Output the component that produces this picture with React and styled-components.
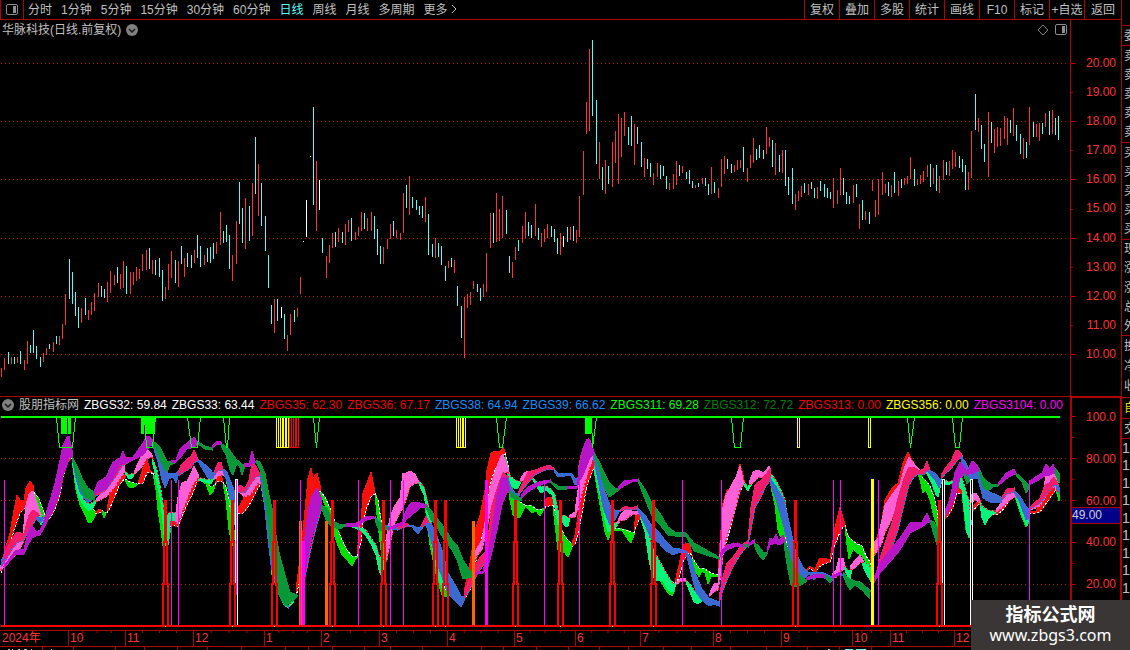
import React from "react";
import styled, { createGlobalStyle } from "styled-components";

const GlobalStyle = createGlobalStyle`
  * {
    box-sizing: border-box;
  }

  body {
    margin: 0;
    background: #000;
    color: #c0c0c0;
    font-family: "Liberation Sans", "Noto Sans CJK SC", sans-serif;
    font-size: 12px;
    line-height: 16px;
  }
`;

// ---------- Data ----------

const periods = ["分时", "1分钟", "5分钟", "15分钟", "30分钟", "60分钟", "日线", "周线", "月线", "多周期", "更多"];
const tools = ["复权", "叠加", "多股", "统计", "画线", "F10", "标记", "+自选", "返回"];

const prices = ["20.00", "19.00", "18.00", "17.00", "16.00", "15.00", "14.00", "13.00", "12.00", "11.00", "10.00"];
const priceTicks = [63, 92, 121, 150, 179, 209, 238, 267, 296, 325, 354];
const levels = ["100.0", "80.00", "60.00", "40.00", "20.00"];

const readings = [
  ["ZBGS32: 59.84", "#ffffff"],
  ["ZBGS33: 63.44", "#ffffff"],
  ["ZBGS35: 62.30", "#f00000"],
  ["ZBGS36: 67.17", "#f00000"],
  ["ZBGS38: 64.94", "#1090ff"],
  ["ZBGS39: 66.62", "#1090ff"],
  ["ZBGS311: 69.28", "#00ff00"],
  ["ZBGS312: 72.72", "#008000"],
  ["ZBGS313: 0.00", "#f00000"],
  ["ZBGS356: 0.00", "#ffff00"],
  ["ZBGS3104: 0.00", "#ff00ff"],
];

// label and share of the axis width
const months = [
  ["2024年", 68],
  ["10", 57],
  ["11", 68],
  ["12", 71],
  ["1", 57],
  ["2", 58],
  ["3", 68],
  ["4", 67],
  ["5", 61],
  ["6", 65],
  ["7", 73],
  ["8", 68],
  ["9", 71],
  ["10", 38],
  ["11", 64],
  ["12", 167],
];

const footTicks = [42, 73, 115, 144, 177, 207, 241, 285, 308, 332, 364, 390, 422, 481, 503, 536, 568, 599, 628, 663, 691, 730, 766, 807, 839, 871];

const quoteGroups = [
  { size: 25, rows: [] },
  { size: 20, rows: ["委"] },
  { size: 97, rows: ["卖", "卖", "卖", "卖", "卖"] },
  { size: 97, rows: ["买", "买", "买", "买", "买"] },
  { size: 97, rows: ["现", "涨", "涨", "总", "外"] },
  { size: 61, rows: ["换", "净", "收"] },
  { size: 21, rows: ["自"], color: "#e0e000" },
  { size: 19, rows: ["交"] },
  { size: 213, rows: ["1", "1", "1", "1", "1", "1", "1", "1", "1", "1", "1", "1"], large: true },
];

// x, high, low, kind (r = up, c = down, w = flat)
const candles = `
1,368,377,r 4,358,370,r 8,352,364,c 11,357,364,r 14,357,364,c 17,357,363,r 20,351,364,c 24,360,370,r 27,341,364,r
30,345,353,c 33,330,353,c 36,346,359,c 40,357,367,c 43,353,362,r 46,348,355,r 49,344,349,c 53,342,352,r 56,336,344,c
59,336,345,r 62,324,339,r 65,294,325,r 69,259,299,c 72,272,304,c 75,292,316,c 78,307,328,c 81,308,323,r 85,298,315,c
88,310,320,r 91,302,315,r 94,293,311,r 98,283,297,r 101,286,297,c 104,289,298,c 107,282,302,r 110,271,293,r
114,275,285,r 117,267,283,c 120,274,289,r 123,261,288,r 126,266,294,c 130,272,294,r 133,272,285,r 136,267,281,r
139,269,279,r 142,254,271,r 146,250,270,r 149,248,269,c 152,260,274,r 155,260,275,c 159,258,277,c 162,270,301,c
165,287,299,r 168,264,290,r 171,251,278,r 175,260,283,c 178,261,287,r 181,246,264,c 184,258,277,r 187,253,267,c
191,255,268,c 194,250,263,r 197,235,258,c 200,246,267,c 204,255,265,r 207,248,262,c 210,247,263,c 213,243,259,c
216,242,254,r 220,212,245,r 223,231,243,c 226,225,242,c 229,235,269,c 232,255,281,r 236,221,264,r 239,182,224,c
242,208,243,c 245,198,249,r 249,206,241,c 252,183,236,r 255,137,194,c 258,164,216,r 261,183,226,c 265,216,251,c
268,255,288,c 271,305,324,c 274,299,333,r 277,299,321,c 281,307,318,w 284,314,339,c 287,335,351,r 290,314,335,r
294,310,322,c 297,308,317,r 300,277,294,r 303,241,242,w 306,200,237,w 310,156,157,w 313,107,205,c 316,161,231,r
319,180,210,w 322,238,253,c 326,256,278,r 329,245,263,r 332,233,248,r 335,232,247,c 338,228,242,r 342,232,243,c
345,224,245,r 348,220,232,r 351,218,241,c 355,232,240,r 358,227,236,r 361,212,231,r 364,213,229,c 367,218,231,r
371,212,231,r 374,216,239,c 377,229,255,c 380,246,264,c 383,247,264,r 387,239,249,r 390,224,239,r 393,221,236,c
396,230,238,r 400,233,240,r 403,193,233,r 406,185,208,c 409,176,215,r 412,197,208,c 416,200,210,c 419,206,215,c
422,206,218,c 425,197,222,r 428,214,255,c 432,244,257,c 435,238,258,r 438,243,257,c 441,246,265,c 445,266,281,c
448,261,268,r 451,258,267,c 454,260,273,r 457,286,306,c 461,306,338,c 464,297,358,r 467,294,308,r 470,292,305,r
473,281,289,r 477,284,292,c 480,288,301,c 483,284,297,r 486,253,292,r 490,213,248,r 493,213,243,c 496,193,242,r
499,209,241,r 502,196,238,r 506,210,234,c 509,256,273,c 512,262,278,r 515,247,260,r 518,240,251,c 522,226,243,r
525,212,238,r 528,222,236,c 531,225,238,c 535,204,236,r 538,228,240,c 541,233,247,r 544,229,242,r 547,224,238,r
551,226,237,c 554,229,242,c 557,238,254,c 560,233,255,r 563,236,247,w 567,227,242,c 570,227,240,r 573,226,241,c
576,230,243,r 579,196,237,r 583,151,195,r 586,102,134,r 589,49,131,r 592,40,116,c 596,100,164,c 599,142,179,r
602,167,190,c 605,160,194,r 608,166,184,c 612,142,187,r 615,131,163,r 618,114,184,r 621,118,157,r 624,112,136,r
628,127,145,c 631,116,146,c 634,124,165,r 637,127,144,c 641,142,167,c 644,158,177,r 647,159,169,c 650,163,177,c
653,173,185,r 657,163,177,r 660,165,179,c 663,166,176,c 666,176,189,c 669,183,190,r 673,174,189,r 676,161,185,r
679,165,176,c 682,166,173,r 686,172,179,c 689,170,184,c 692,181,188,c 695,185,188,r 698,183,187,c 702,178,184,r
705,178,186,c 708,184,195,c 711,167,194,r 714,182,193,c 718,188,198,r 721,159,187,r 724,156,174,r 727,159,169,c
731,164,173,c 734,165,172,r 737,160,170,r 740,160,168,r 743,147,172,c 747,168,182,r 750,155,168,r 753,138,163,r
756,149,160,c 759,145,158,c 763,150,159,c 766,127,154,r 769,137,147,r 772,140,167,c 775,143,175,r 779,155,172,c
782,150,173,r 785,150,186,c 788,177,195,c 792,168,204,c 795,194,210,r 798,191,201,r 801,186,197,r 804,183,193,c
808,184,195,r 811,182,189,c 814,188,198,c 817,187,199,r 820,181,191,c 824,184,197,c 827,188,198,c 830,192,199,c
833,178,208,r 837,190,204,r 840,168,195,r 843,178,195,c 846,192,204,c 849,196,204,c 853,185,203,r 856,184,197,c
859,204,229,r 862,200,220,c 865,211,220,r 869,212,224,c 872,180,191,r 875,200,217,r 878,179,215,r 882,172,195,r
885,184,193,r 888,182,196,c 891,185,197,r 894,172,193,c 898,181,196,r 901,179,188,c 904,178,185,r 907,176,184,r
910,157,179,r 914,169,186,c 917,179,185,r 920,175,184,r 923,171,182,r 927,165,177,r 930,164,187,c 933,168,184,r
936,165,191,c 939,176,193,r 943,160,180,r 946,162,175,c 949,161,176,r 952,150,169,r 955,152,167,r 959,156,168,c
962,159,172,c 965,165,190,c 968,172,190,r 971,131,178,r 975,94,130,c 978,118,132,r 981,125,149,c 984,144,162,c
988,112,177,r 991,122,143,c 994,129,153,r 997,127,147,r 1000,128,146,r 1004,116,139,r 1007,118,145,r 1010,120,133,c
1013,108,136,r 1016,125,141,c 1020,134,154,c 1023,138,159,r 1026,142,158,c 1029,107,145,r 1033,122,137,c
1036,124,137,r 1039,123,141,r 1042,123,134,c 1045,113,127,r 1049,111,135,c 1052,110,134,r 1055,118,135,c
1058,116,140,c`;

// Ribbons: every run is "u" (rising) or "d" (falling) followed by x,top,bottom points
const ribbons = [
  {
    up: "#f8100c",
    down: "#00e000",
    line: "#ffffff",
    runs: `
u 1,567,573 5,550,560 10,533,545 14,510,530 17,495,522 20,500,513 24,501,509 26,488,505 30,481,500 33,485,494 34,492,493
d 34,492,493 36,495,506 39,499,513 42,507,520 45,515,518
u 45,516,519 50,514,518 55,502,509 60,485,495 63,468,477 68,456,462 72,456,458
d 72,457,460 76,475,490 80,500,505 85,504,515 88,507,522 91,508,523 95,511,516
u 95,513,514 99,509,513 102,511,512
d 102,510,512 104,512,518 106,512,513
u 107,510,513 110,493,508 115,483,496 120,477,484 125,474,478
d 125,479,480 128,481,486 131,482,488 134,483,487 137,484,485
u 138,483,484 143,468,483 147,459,473 150,470,472 153,473,474
d 153,473,474 156,478,490 158,482,510 161,497,530 163,510,546 165,520,546 168,520,545 170,528,533
u 170,518,527 174,514,525 177,519,527 178,520,526 182,510,517 187,498,505 192,489,495 197,479,482 200,478,480
d 200,479,480 206,480,484 210,486,495 213,486,492 215,484,486
u 215,484,485 218,475,481 221,474,481 223,482,483
d 223,482,483 226,487,500 229,500,530 232,520,546 234,530,540
u 238,508,514 243,500,513 248,488,507 252,482,500 258,478,488 261,482,484
d 261,484,486 266,500,512 270,535,550 274,565,575
u 296,590,597 301,550,575 305,510,560 308,478,530 311,468,510 313,478,500 317,473,490 320,485,492
d 320,491,493 325,497,505 330,508,522 337,527,543 342,540,555 347,550,560 352,556,566 355,557,560 358,556,557
u 357,553,556 361,523,543 363,493,523 367,483,507 371,472,497 374,487,494 375,493,494
d 375,493,495 378,500,525 381,520,550 385,540,563 387,555,560
d 425,500,505 430,525,545 434,545,565 438,565,583 442,583,595 446,590,597 450,592,595
u 464,592,600 470,563,590 475,530,565 480,515,545 485,490,525 487,470,505 491,453,480 495,451,470 500,452,462 503,447,455 505,452,454
d 505,453,455 508,465,480 510,478,500 513,490,515 516,494,518 520,502,517 525,505,507
d 525,505,506 532,506,513 536,509,511 540,510,516 544,508,509
u 544,508,512 546,499,506 549,497,506 552,498,505 554,505,506
d 553,505,506 555,512,525 558,520,550 561,527,552 564,535,552 568,540,557 572,544,547
u 572,543,547 575,535,544 578,515,535 583,485,508 587,465,485 592,460,473 595,462,465
d 594,465,470 600,495,505 605,520,532 608,530,540 611,528,533 614,527,530
d 614,528,530 622,529,530 626,530,537 631,532,543 634,532,535
u 634,530,533 636,513,527 639,513,520 641,517,518
d 641,515,518 648,530,540 654,553,565 660,563,580 667,575,592 672,582,596 674,583,592
u 675,582,584 679,565,578 683,545,562 687,543,555 690,545,553 692,555,556
d 692,557,558 695,562,570 699,568,577 702,568,571 705,569,573 708,571,584 711,573,577 714,574,576 718,575,577
u 718,570,575 721,530,560 723,503,553 727,490,540 732,487,522 736,478,505 740,464,492 743,475,485 745,485,487
d 744,482,484 748,487,490 752,480,484
d 770,475,480 772,480,492 775,488,505 778,498,530 780,510,536 783,520,536 786,540,550 790,560,575 794,575,580
u 803,573,575 810,566,568 815,570,573 819,559,567 824,558,564 830,560,562 835,527,545 840,507,532 843,518,527 845,525,526
d 845,525,526 847,533,545 849,537,559 853,541,549 857,544,553 862,546,556 866,556,562 870,562,571
u 870,550,565 876,540,550 881,525,540 885,500,525 892,488,510 898,483,500 903,463,480 908,452,465 911,458,462 918,470,472
d 918,470,473 920,472,480 923,478,493 926,481,490 930,486,500 934,497,517 937,510,525 939,525,542
u 944,512,520 948,505,516 953,485,507 957,476,493 962,488,494
d 962,490,494 966,515,530 969,525,538
u 972,508,512 979,500,504 986,511,513 996,510,515 1002,507,511 1010,495,500 1015,494,497
d 1015,494,497 1021,507,515 1026,518,527 1029,518,522
u 1029,511,513 1036,511,513 1040,505,512 1045,495,505 1050,485,498 1056,480,490
d 1056,485,490 1059,490,501`,
  },
  {
    up: "#ff60d8",
    down: "#00f57a",
    line: "#f02020",
    runs: `
u 1,565,570 10,553,560 18,543,553 23,533,543 26,505,535 29,494,523 33,491,515 36,500,513 40,512,516 43,517,518
d 38,515,518 41,515,525 44,518,519
u 45,517,519 58,480,495 66,455,462 72,452,456
d 72,456,459 75,465,480 79,488,497 84,500,506 89,504,511 93,502,508 96,500,502
u 96,499,502 106,490,497 115,477,487 124,465,473
d 125,471,473 128,474,478 131,474,479 135,473,474
u 134,473,475 138,463,471 142,455,467 146,449,460 149,451,458 152,455,457
d 152,457,460 157,470,483 161,490,503 164,510,535 166,515,545 168,514,545 170,512,520 175,513,520 177,517,524
u 175,520,522 178,497,524 182,483,513 187,481,500 191,473,490 194,466,483 198,474,478
d 198,478,480 205,479,482 211,479,484 214,476,478
u 214,476,480 219,470,476 225,473,475
d 226,475,478 229,485,495 232,500,520 234,500,525
u 238,488,491 244,490,497 250,484,495 254,474,490 258,471,483 261,482,484
d 262,480,486 266,500,512 269,525,545 272,560,575 275,575,582 279,588,592 284,600,605 288,606,608 293,600,603
d 352,526,527 360,527,530 366,530,536 371,538,544 376,545,555 379,555,570 381,558,575 385,560,564
u 386,540,562 390,518,545 394,507,525 400,498,513 403,473,508 406,473,500 410,471,487 415,474,483 419,482,483
d 419,481,484 424,487,495 428,503,520 431,520,540 435,545,563 439,565,580 443,580,590
u 474,553,560 482,540,550 487,510,530 490,488,513 495,472,495 500,458,480 503,454,473 507,465,472 509,472,473
d 508,472,475 511,477,485 515,480,489 518,481,488 521,481,482
u 520,480,482 524,473,480 528,471,475 531,475,476
d 532,477,478 537,482,487 541,486,493 546,486,490 552,490,495 555,495,508 558,510,525 561,515,520 565,515,526 568,518,526 570,517,518
u 569,516,518 575,512,517 578,490,510 581,470,498 586,458,480 590,451,467 593,450,460 595,460,462
d 594,455,470 600,480,495 605,505,520 608,515,532 612,522,530 616,522,527 618,523,524
u 617,523,525 621,514,520 625,510,520 632,511,515 638,511,514 641,514,515
d 640,514,517 645,525,532 649,535,560 652,545,575 655,553,580 663,567,581 668,576,590 673,583,592 676,583,585
u 676,583,585 681,578,581 685,578,581
d 686,580,582 690,584,592 694,590,602 698,595,604 703,597,600
u 709,595,597 714,584,592 718,583,590 721,540,575 723,507,555 726,495,540 730,488,527 736,477,507 740,466,490 743,480,485 745,485,487
d 744,483,485 748,487,491 751,483,485
u 749,483,485 753,472,483 758,470,478 764,473,477 769,466,480 771,475,480
d 771,474,480 776,480,490 781,490,500 785,500,530 789,530,550
u 832,574,576 836,570,578 839,558,573 843,558,570 845,566,569
d 844,566,568 848,570,577 850,570,579 852,568,570
u 850,567,570 855,560,568 860,555,563 863,560,562
d 862,562,564 866,563,573 870,567,580
u 871,552,562 874,542,556 878,538,550 882,520,543 885,505,533 893,493,517 900,484,500 905,466,485 909,457,472 915,465,470 920,470,471
d 920,470,472 927,471,474 932,476,484 936,482,495 938,484,497 941,480,484
d 944,480,484 950,482,484 956,478,482 962,478,490 965,487,515 967,495,533 969,500,537 971,520,525
u 971,495,503 976,493,500 980,500,503
d 980,500,504 982,506,518 985,508,525 988,510,519 993,511,514 996,512,513
u 996,510,513 1003,500,507 1010,492,500 1015,493,497
d 1016,495,498 1022,505,515 1027,518,526 1029,515,518
u 1029,509,511 1040,498,506 1044,490,500 1046,473,495 1049,478,492 1054,470,487 1058,485,492`,
  },
  {
    up: "#f01c6c",
    down: "#3c68d0",
    line: "#1e80f0",
    runs: `
u 1,562,567 7,548,558 13,537,548 17,532,543 24,534,540 29,515,530 33,510,524 38,513,517
d 1,560,566 3,558,560
d 36,517,519 40,517,523 44,517,518
d 72,455,458 76,472,478 80,485,492 88,497,503 93,495,499
u 93,496,498 106,484,490 115,468,478 122,458,466 133,457,460 142,449,455 150,440,446 154,442,444
d 153,443,446 158,453,462 162,462,480 165,470,488 169,474,479 173,473,477 176,473,483 179,470,473
u 178,474,476 181,465,474 186,460,471 191,456,468 194,450,463 198,459,461
d 198,459,461 203,463,470 208,467,478 213,473,478 216,472,473
u 214,472,474 218,463,471 221,462,470 223,470,471
d 223,469,471 227,472,482 230,480,499 234,490,502
u 235,490,495 240,485,492 245,488,493 249,480,487 252,463,482 256,466,477 260,474,476
d 260,474,476 264,490,500 267,510,530 271,555,565 275,580,583 279,590,594 288,605,607
u 300,588,590 305,576,577 312,543,544 317,523,524 322,507,508
d 322,507,508 332,520,521 340,525,526 352,525,526
u 352,525,526 363,520,521 375,517,518
d 375,517,519 383,525,527 397,528,530
u 397,527,530 402,522,528 408,524,526
d 408,525,526 412,525,527 418,528,534 423,526,527
u 421,526,528 426,516,525 429,522,524
d 426,523,525 431,523,540 436,533,560 443,553,580 448,573,593 456,586,602 461,596,607 464,597,601
u 464,592,600 471,575,587 478,560,573 485,552,563 489,530,550 492,505,530 498,486,500 503,473,485 508,476,478
d 508,478,485 511,487,497 515,493,499 519,494,496
u 518,493,496 523,482,489 528,472,483 535,470,475 543,467,471 549,465,469 554,468,470
d 554,470,471 558,473,477 565,473,476 571,473,475 575,478,485 578,480,483
u 578,470,480 581,455,470 585,445,455 588,440,445
d 593,452,456 598,468,480 603,487,507 607,497,518 610,505,525 615,510,520 619,511,512
u 619,511,512 625,506,509 631,508,509 637,506,509
d 637,507,509 645,515,525 652,526,540 659,532,543 665,540,550 673,548,555 680,549,552 686,551,553
d 686,551,553 691,558,573 696,575,592 702,589,600 709,598,606 714,600,604 719,602,606
u 719,597,603 723,577,590 727,563,580 733,557,567 740,547,555 748,540,545 751,507,530 755,485,508 761,480,497 766,474,486 770,469,481
d 770,478,482 777,488,503 784,500,527 790,527,555 796,553,574 803,567,579 808,572,575
d 808,572,574 810,572,575 814,572,580 818,572,574 824,573,578 832,577,580
u 832,577,579 840,573,574
d 840,573,574 850,580,581 860,582,584 870,590,591
u 877,570,572 881,555,565 887,537,555 893,520,545 898,498,530 904,478,505 909,467,485 914,467,477 919,471,474
u 919,472,474 924,468,475 927,461,471 930,470,471
d 928,470,472 935,473,480 939,478,488 941,480,482
u 941,475,479 946,467,473 951,461,469 956,450,462 959,451,459 962,455,458
d 961,456,460 966,463,475 969,470,481 973,468,478 978,471,479 983,487,498 990,492,502 1001,497,502
u 1002,497,500 1007,489,494 1014,488,492
d 1014,490,492 1020,496,503 1026,506,520 1029,510,518
u 1029,508,510 1040,498,503 1045,485,497 1049,483,492 1054,477,485 1058,484,486
d 1056,485,488 1059,487,493`,
  },
  {
    up: "#b814c8",
    down: "#089838",
    runs: `
u 5,565,567 15,551,555 24,549,554 28,533,545 32,525,538 36,532,536 40,530,535 43,524,530 48,507,520 55,483,507 60,460,492 63,445,475 67,437,465 69,436,458 72,450,457
d 72,456,458 78,468,480 83,480,495 88,488,499 94,492,500
u 94,492,495 98,482,492 106,477,489 113,462,478 120,458,465 123,451,463 126,459,463 133,457,460 143,443,455 147,436,450 150,437,446 153,440,442
d 153,441,443 160,447,460 165,457,470 167,461,472 170,461,465 175,461,463
u 171,460,462 176,460,462 180,449,458 187,443,449 194,437,447 198,443,445
d 198,442,444 205,446,449 212,448,450
u 212,446,449 217,441,444 221,442,445
d 221,443,446 226,447,455 230,450,470 233,455,475 237,460,463 240,462,468 242,464,475 245,464,466
u 244,463,466 249,464,467 252,451,464 255,461,463
d 256,460,462 260,462,470 265,473,495 268,490,525 272,508,560 276,535,580 279,552,595 285,575,606 290,592,603 297,595,597
u 299,580,590 304,545,578 308,510,557 312,496,537 317,488,522 321,497,507
d 321,505,507 327,508,522 333,521,527 340,525,529 346,524,525
u 346,524,526 358,523,526 365,517,521 372,516,518 375,518,519
d 375,518,520 379,522,531 385,525,529 388,528,530
u 388,528,530 402,522,525 407,508,519 412,502,515 420,503,508 427,505,507
d 426,505,507 431,510,520 436,517,525 444,527,540 452,540,550 457,545,560 463,560,579 472,573,577
u 472,573,575 483,571,573 488,553,567 492,530,552 497,495,530 502,477,505 507,478,492 510,490,493
d 509,490,493 515,495,500 521,498,500
u 521,495,499 528,487,492 536,483,487 543,481,484 550,480,482
d 550,481,482 558,486,490 567,487,489
u 567,487,489 577,486,488 579,468,482 583,448,475 587,439,465 590,440,458 594,452,454
d 594,453,455 599,461,468 604,472,487 609,482,497 615,488,493 619,488,490
u 618,487,490 624,481,486 632,480,482 638,479,481
d 638,479,481 646,491,502 653,505,518 660,513,525 668,527,535 675,532,536 686,533,536 694,543,551 703,548,554 719,557,559
u 720,553,557 727,545,550 736,543,546 744,545,547
d 744,544,546 748,545,547
u 748,544,546 754,540,543
d 754,543,545 758,545,554 763,552,560 767,552,554
u 767,550,553 770,538,545 773,540,544 776,534,543 779,541,545 783,535,543 785,540,542
d 784,540,545 788,550,570 791,560,585 796,570,587 801,576,585 806,580,582
u 806,578,580 813,575,578 824,574,577 828,578,580
d 825,575,577 830,578,583 832,578,580
u 832,576,579 840,572,574
d 843,572,575 847,577,585 850,579,590 855,581,585 862,583,590 869,590,598
u 873,580,584 880,563,573 890,550,562 900,538,550 910,523,533 922,522,527 927,513,523 930,520,522
d 930,520,521 934,522,535 937,527,545
u 944,512,518 950,500,508 955,472,497 960,462,478 965,468,475
d 964,473,476 967,476,484 969,478,482
u 966,473,476 970,465,473 972,461,474 975,463,472 979,468,471
d 979,468,473 983,477,487 988,482,491 993,485,487 998,484,486
u 998,484,486 1006,473,479 1014,469,474 1016,473,475
d 1016,473,476 1022,478,482 1026,482,493 1029,485,489
u 1029,482,485 1037,476,481 1042,473,478 1046,464,475 1050,469,475 1053,464,473 1055,470,473
d 1055,468,473 1059,473,483`,
  },
];

// x, top, width, colour; all of them stand on the base line
const signalBars = [
  [299, 521, 3, "#ff6600"],
  [325, 521, 3, "#ff6600"],
  [472, 521, 3, "#ff6600"],
  [302, 541, 3, "#ff00ff"],
  [485, 480, 3, "#ff00ff"],
  [871, 479, 3, "#ffff00"],
  ...[4, 171, 178, 300, 358, 390, 403, 544, 579, 682, 721, 833, 840, 878, 1029].map((x) => [x, 480, 1, "#ff00ff"]),
];
const spikes = [165, 232, 274, 332, 383, 435, 445, 515, 560, 612, 653, 795, 939];
const whiteBoxes = [235, 942, 970];

const funnels = [
  "56,417 59,447 72,447 75,417",
  "144,417 146,447 152,447 155,417",
  "187,417 191,447 197,447 200,417",
  "223,417 226,447 227,447 229,417",
  "313,417 316,447 319,417",
  "496,417 499,447 502,447 506,417",
  "591,417 592,447 596,417",
  "731,417 734,447 740,447 743,417",
  "907,417 910,447 914,417",
  "952,417 955,447 959,447 962,417",
];
const greenBlocks = [
  [61, 6],
  [68, 3],
  [141, 3],
  [145, 10],
  [585, 6],
];
const combs = [
  { color: "#ffff00", xs: [276, 278, 280, 282, 283, 285, 286, 288] },
  { color: "#ff0000", xs: [289, 291, 293, 295, 296, 298] },
  { color: "#ffff00", xs: [456, 458, 460, 462, 463, 465] },
  { color: "#ffff00", xs: [797, 799] },
  { color: "#ffff00", xs: [868, 870] },
];

const candleColors = { r: "#ff3232", c: "#54fcfc", w: "#ffffff" };

// ---------- Styles ----------

const Screen = styled.div`
  position: relative;
  display: grid;
  grid-template-columns: minmax(0, 1fr) 9px;
  height: 100vh;
  min-height: 400px;
  overflow: hidden;
`;

const Terminal = styled.main`
  display: flex;
  flex-direction: column;
  min-width: 0;
  min-height: 0;
`;

const Toolbar = styled.header`
  display: flex;
  flex: none;
  height: 20px;
  border-bottom: 1px solid #b00000;
`;

const IconButton = styled.button`
  display: flex;
  align-items: center;
  justify-content: center;
  padding: 0;
  border: none;
  background: none;
  cursor: pointer;
`;

const LayoutButton = styled(IconButton)`
  width: 24px;
  border-left: 1px solid #b00000;
  border-right: 1px solid #b00000;
`;

const PeriodNav = styled.nav`
  display: flex;
  align-items: center;
  flex: 1;
  gap: 9px;
  padding-left: 4px;
`;

const TextButton = styled.button`
  padding: 0;
  border: none;
  background: none;
  color: ${({ $active }) => ($active ? "#54fcfc" : "#c0c0c0")};
  font: inherit;
  white-space: nowrap;
  cursor: pointer;
`;

const ToolNav = styled.nav`
  display: flex;
`;

const ToolButton = styled(TextButton)`
  width: 35px;
  border-left: 1px solid #b00000;

  &:last-child {
    width: 37px;
  }
`;

const Panel = styled.section`
  display: grid;
  grid-template-columns: minmax(0, 1fr) 51px;
  flex: ${({ $grow }) => $grow} 1 0;
  min-height: 0;
`;

const PanelBody = styled.div`
  display: flex;
  flex-direction: column;
  min-width: 0;
  min-height: 0;
`;

const IndicatorBody = styled(PanelBody)`
  border-top: 1px solid #b00000;
`;

const TitleRow = styled.div`
  display: flex;
  align-items: center;
  flex: none;
  gap: 5px;
  height: 19px;
  padding: 0 3px 0 2px;
`;

const Title = styled.h1`
  margin: 0;
  font: inherit;
  white-space: nowrap;
`;

const RowTools = styled.div`
  display: flex;
  gap: 6px;
  margin-left: auto;
`;

const ReadingRow = styled(TitleRow)`
  height: 16px;
  padding-right: 0;
  overflow: hidden;
`;

const Reading = styled.span`
  color: ${({ $color }) => $color};
  white-space: nowrap;
`;

const Plot = styled.svg`
  display: block;
  flex: 1;
  width: 100%;
  min-height: 0;
`;

const Axis = styled.div`
  position: relative;
  display: flex;
  min-height: 0;
  border-left: 1px solid #b00000;
`;

const IndicatorAxis = styled(Axis)`
  border: 2px solid #b00000;
  border-right-width: 1px;
  border-bottom: none;
`;

const Ticks = styled.svg`
  display: block;
  width: 6px;
  height: 100%;
`;

const Scale = styled.ol`
  display: flex;
  flex: 1;
  flex-direction: column;
  justify-content: space-between;
  margin: 0;
  padding: ${({ $indicator }) => ($indicator ? "13px 4px 40px 0" : "37px 5px 36px 0")};
  list-style: none;
  color: #ff3232;
  line-height: 12px;
  text-align: right;
`;

const CursorValue = styled.output`
  position: absolute;
  top: 109px;
  left: 0;
  right: 0;
  height: 17px;
  border-top: 1px solid #b00000;
  border-bottom: 1px solid #b00000;
  background: #000088;
  color: #d0d0d0;
  line-height: 15px;
`;

const Timeline = styled.div`
  display: grid;
  grid-template-columns: ${months.map(([, share]) => `minmax(0, ${share}fr)`).join(" ")};
  flex: none;
  height: 17px;
  border-top: 1px solid #b00000;
  border-bottom: 1px solid #b00000;
`;

// the gradient gives the week marks along the upper edge
const Month = styled.span`
  padding-left: 1px;
  border-left: 1px solid #b00000;
  background: linear-gradient(90deg, #b00000 1px, transparent 1px) 0 0 / 25% 2px repeat-x border-box;
  color: #ff3232;
  line-height: 15px;
  white-space: nowrap;

  &:first-child {
    border-left-color: transparent;
    background: none;
  }
`;

const Foot = styled.svg`
  display: block;
  flex: none;
  width: 100%;
  height: 3px;
`;

const QuoteStrip = styled.aside`
  display: flex;
  flex-direction: column;
  min-height: 0;
  overflow: hidden;
  border-left: 1px solid #b00000;
`;

const QuoteGroup = styled.div`
  display: flex;
  flex: ${({ $size }) => $size} 1 0;
  flex-direction: column;
  min-height: 0;
  padding-left: ${({ $large }) => ($large ? 0 : 2)}px;
  border-bottom: 1px solid #b00000;
  color: ${({ $color }) => $color || "#c0c0c0"};
  font-size: ${({ $large }) => ($large ? 14 : 12)}px;
`;

const QuoteCell = styled.span`
  display: flex;
  align-items: center;
  flex: 1 1 0;
  min-height: 0;
  white-space: nowrap;
`;

const Badge = styled.div`
  position: absolute;
  right: 0;
  bottom: 0;
  display: flex;
  flex-direction: column;
  align-items: center;
  width: 159px;
  height: 50px;
  padding-top: 5px;
  background: #3a3636;
  color: #fff;
`;

const BadgeName = styled.strong`
  font-size: 18px;
  line-height: 20px;
`;

const BadgeLink = styled.a`
  color: inherit;
  font-family: "Noto Sans", sans-serif;
  font-size: 16px;
  line-height: 21px;
  text-decoration: none;
`;

// ---------- Icons ----------

const LayoutIcon = () => (
  <svg width="12" height="11" viewBox="0 0 12 11">
    <rect x="0.5" y="0.5" width="11" height="10" rx="1.5" fill="none" stroke="#8c8c8c" />
    <rect x="7" y="2" width="3" height="7" fill="#909090" />
  </svg>
);

const DiamondIcon = () => (
  <svg width="12" height="12" viewBox="0 0 12 12">
    <path d="M6 1 11 6 6 11 1 6Z" fill="none" stroke="#808080" />
  </svg>
);

const ChevronBadge = () => (
  <svg width="12" height="12" viewBox="0 0 12 12">
    <circle cx="6" cy="6" r="6" fill="#808080" />
    <path d="M3 5 6 8 9 5" fill="none" stroke="#181818" strokeWidth="1.5" />
  </svg>
);

const MoreIcon = () => (
  <svg width="6" height="10" viewBox="0 0 6 10">
    <path d="M1 1 5 5 1 9" fill="none" stroke="#c0c0c0" />
  </svg>
);

// ---------- Charts ----------

const GridLines = ({ ys }) =>
  ys.map((y) => <path key={y} d={`M1 ${y + 0.5}H1068`} stroke="#b01010" strokeDasharray="1 3" />);

const PriceChart = () => (
  <Plot viewBox="0 39 1070 357" preserveAspectRatio="none" shapeRendering="crispEdges" role="img" aria-label="日线">
    <GridLines ys={priceTicks.filter((_, i) => i % 2 === 0)} />
    {candles
      .trim()
      .split(/\s+/)
      .map((item) => {
        const [x, high, low, kind] = item.split(",");
        return <rect key={x} x={x} y={high} width="1" height={low - high} fill={candleColors[kind]} />;
      })}
  </Plot>
);

const Ribbon = ({ up, down, line, runs }) =>
  runs
    .trim()
    .split("\n")
    .map((run) => {
      const [kind, ...rest] = run.split(" ");
      const pts = rest.map((p) => p.split(",").map(Number));
      const top = pts.map(([x, a]) => `${x},${a}`);
      const bottom = pts.map(([x, , b]) => `${x},${b}`);
      const color = kind === "u" ? up : down;
      return (
        <g key={run}>
          <polygon points={[...top, ...[...bottom].reverse()].join(" ")} fill={color} stroke={color} />
          {line && (
            <polyline
              points={(kind === "u" ? bottom : top).join(" ")}
              fill="none"
              stroke={line}
              strokeDasharray="2 2"
            />
          )}
        </g>
      );
    });

const IndicatorChart = () => (
  <Plot viewBox="0 413 1070 217" preserveAspectRatio="none" shapeRendering="crispEdges" role="img" aria-label="股朋指标网">
    <GridLines ys={[458, 500, 542, 584]} />
    {ribbons.map((ribbon) => (
      <Ribbon key={ribbon.up} {...ribbon} />
    ))}

    {/* signals on the base line */}
    {signalBars.map(([x, top, width, color]) => (
      <rect key={`${x}-${top}`} x={x} y={top} width={width} height={625 - top} fill={color} />
    ))}
    {whiteBoxes.map((x) => (
      <path key={x} d={`M${x + 0.5} 625V479.5H${x + 2.5}V625`} fill="none" stroke="#fff" />
    ))}
    <rect x="236" y="480" width="1" height="115" fill="#ff00ff" />
    <rect x="1" y="625" width="1058" height="2" fill="#ff0000" />
    {spikes.map((x) => (
      <g key={x}>
        <path
          d={`M${x - 2} 626V584H${x - 1}V542H${x}V501H${x + 1}V542H${x + 2}V584H${x + 3}V626`}
          fill="none"
          stroke="#ff0000"
          strokeWidth="2"
        />
        <rect x={x} y="626" width="1" height="1" fill="#ffff00" />
      </g>
    ))}

    {/* signals hanging from the top line */}
    <rect x="1" y="416" width="1059" height="2" fill="#00ff00" />
    {funnels.map((points) => (
      <polyline key={points} points={points} transform="translate(0.5 0.5)" fill="none" stroke="#00ff00" />
    ))}
    {greenBlocks.map(([x, width]) => (
      <rect key={x} x={x} y="417" width={width} height="17" fill="#00ff00" />
    ))}
    {combs.map(({ color, xs }) => (
      <g key={xs[0]} fill={color}>
        {xs.map((x) => (
          <rect key={x} x={x} y="418" width="1" height="30" />
        ))}
        <rect x={xs[0]} y="447" width={xs[xs.length - 1] - xs[0] + 1} height="1" />
      </g>
    ))}
  </Plot>
);

const App = () => {
  return (
    <>
      <GlobalStyle />
      <Screen>
        <Terminal>
          <Toolbar>
            <LayoutButton aria-label="布局">
              <LayoutIcon />
            </LayoutButton>
            <PeriodNav>
              {periods.map((name) => (
                <TextButton key={name} $active={name === "日线"}>
                  {name}
                  {name === "更多" && (
                    <>
                      {" "}
                      <MoreIcon />
                    </>
                  )}
                </TextButton>
              ))}
            </PeriodNav>
            <ToolNav>
              {tools.map((name) => (
                <ToolButton key={name}>{name}</ToolButton>
              ))}
            </ToolNav>
          </Toolbar>

          {/* Price panel */}
          <Panel $grow={376}>
            <PanelBody>
              <TitleRow>
                <Title>华脉科技(日线.前复权)</Title>
                <IconButton aria-label="展开">
                  <ChevronBadge />
                </IconButton>
                <RowTools>
                  <IconButton aria-label="标记">
                    <DiamondIcon />
                  </IconButton>
                  <IconButton aria-label="侧栏">
                    <LayoutIcon />
                  </IconButton>
                </RowTools>
              </TitleRow>
              <PriceChart />
            </PanelBody>
            <Axis>
              <Ticks viewBox="0 20 6 376" preserveAspectRatio="none" shapeRendering="crispEdges">
                {priceTicks.map((y, i) => (
                  <rect key={y} x="0" y={y} width={i % 2 ? 2 : 5} height="1" fill="#b00000" />
                ))}
              </Ticks>
              <Scale>
                {prices.map((price) => (
                  <li key={price}>{price}</li>
                ))}
              </Scale>
            </Axis>
          </Panel>

          {/* Indicator panel */}
          <Panel $grow={234}>
            <IndicatorBody>
              <ReadingRow>
                <IconButton aria-label="指标">
                  <ChevronBadge />
                </IconButton>
                <Reading>股朋指标网</Reading>
                {readings.map(([text, color]) => (
                  <Reading key={text} $color={color}>
                    {text}
                  </Reading>
                ))}
              </ReadingRow>
              <IndicatorChart />
            </IndicatorBody>
            <IndicatorAxis>
              <Ticks viewBox="0 398 6 232" preserveAspectRatio="none" shapeRendering="crispEdges">
                {[416, 437, 458, 479, 500, 521, 542, 563, 584, 605].map((y, i) => (
                  <rect key={y} x="0" y={y} width={i % 2 ? 2 : 4} height="1" fill="#b00000" />
                ))}
              </Ticks>
              <Scale $indicator>
                {levels.map((level) => (
                  <li key={level}>{level}</li>
                ))}
              </Scale>
              <CursorValue>49.00</CursorValue>
            </IndicatorAxis>
          </Panel>

          <Timeline>
            {months.map(([label], i) => (
              <Month key={i}>{label}</Month>
            ))}
          </Timeline>
          <Foot viewBox="0 647 1121 3" preserveAspectRatio="none" shapeRendering="crispEdges">
            {footTicks.map((x) => (
              <rect key={x} x={x} y="647" width="1" height="3" fill="#b00000" />
            ))}
            <path d="M8 649.5h2M12 649.5h1M18 649.5h2M24 649.5h3M31 649.5h1M51 649.5h1M828 649.5h2" stroke="#c0c0c0" />
            <path d="M845 649.5h8M856 649.5h10" stroke="#54fcfc" />
          </Foot>
        </Terminal>

        <QuoteStrip>
          {quoteGroups.map(({ size, rows, color, large }, i) => (
            <QuoteGroup key={i} $size={size} $color={color} $large={large}>
              {rows.map((row, n) => (
                <QuoteCell key={n}>{row}</QuoteCell>
              ))}
            </QuoteGroup>
          ))}
        </QuoteStrip>

        <Badge>
          <BadgeName>指标公式网</BadgeName>
          <BadgeLink href="http://www.zbgs3.com">www.zbgs3.com</BadgeLink>
        </Badge>
      </Screen>
    </>
  );
};

export default App;
